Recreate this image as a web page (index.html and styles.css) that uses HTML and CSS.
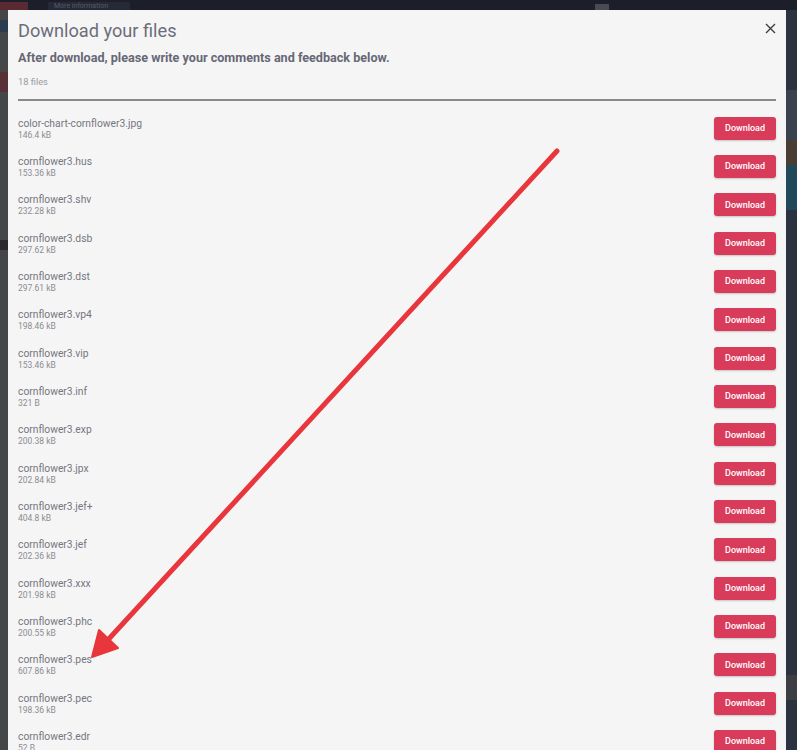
FILE: index.html
```html
<!DOCTYPE html>
<html lang="en">
<head>
<meta charset="utf-8">
<title>Download your files</title>
<link rel="stylesheet" href="styles.css">
</head>
<body>
<div class="backdrop">
  <div class="bg-top"><span class="bg-tab red"></span><span class="bg-tab">More information</span><span class="bg-chip"></span></div>
  <div class="bg-left"><span class="bl bl1"></span><span class="bl bl2"></span><span class="bl bl3"></span></div>
  <div class="bg-right"><span class="br br1"></span><span class="br br2"></span><span class="br br3"></span><span class="br br4"></span></div>
</div>
<div class="modal">
  <button class="close" aria-label="Close">
    <svg width="11" height="11" viewBox="0 0 11 11"><path d="M1 1L10 10M10 1L1 10" stroke="#3d3d45" stroke-width="1.4" fill="none"/></svg>
  </button>
  <h1 class="title">Download your files</h1>
  <p class="subtitle">After download, please write your comments and feedback below.</p>
  <p class="count">18 files</p>
  <hr class="rule">
  <ul class="files">
    <li class="row"><div class="info"><div class="name">color-chart-cornflower3.jpg</div><div class="size">146.4 kB</div></div><a class="btn">Download</a></li>
    <li class="row"><div class="info"><div class="name">cornflower3.hus</div><div class="size">153.36 kB</div></div><a class="btn">Download</a></li>
    <li class="row"><div class="info"><div class="name">cornflower3.shv</div><div class="size">232.28 kB</div></div><a class="btn">Download</a></li>
    <li class="row"><div class="info"><div class="name">cornflower3.dsb</div><div class="size">297.62 kB</div></div><a class="btn">Download</a></li>
    <li class="row"><div class="info"><div class="name">cornflower3.dst</div><div class="size">297.61 kB</div></div><a class="btn">Download</a></li>
    <li class="row"><div class="info"><div class="name">cornflower3.vp4</div><div class="size">198.46 kB</div></div><a class="btn">Download</a></li>
    <li class="row"><div class="info"><div class="name">cornflower3.vip</div><div class="size">153.46 kB</div></div><a class="btn">Download</a></li>
    <li class="row"><div class="info"><div class="name">cornflower3.inf</div><div class="size">321 B</div></div><a class="btn">Download</a></li>
    <li class="row"><div class="info"><div class="name">cornflower3.exp</div><div class="size">200.38 kB</div></div><a class="btn">Download</a></li>
    <li class="row"><div class="info"><div class="name">cornflower3.jpx</div><div class="size">202.84 kB</div></div><a class="btn">Download</a></li>
    <li class="row"><div class="info"><div class="name">cornflower3.jef+</div><div class="size">404.8 kB</div></div><a class="btn">Download</a></li>
    <li class="row"><div class="info"><div class="name">cornflower3.jef</div><div class="size">202.36 kB</div></div><a class="btn">Download</a></li>
    <li class="row"><div class="info"><div class="name">cornflower3.xxx</div><div class="size">201.98 kB</div></div><a class="btn">Download</a></li>
    <li class="row"><div class="info"><div class="name">cornflower3.phc</div><div class="size">200.55 kB</div></div><a class="btn">Download</a></li>
    <li class="row"><div class="info"><div class="name">cornflower3.pes</div><div class="size">607.86 kB</div></div><a class="btn">Download</a></li>
    <li class="row"><div class="info"><div class="name">cornflower3.pec</div><div class="size">198.36 kB</div></div><a class="btn">Download</a></li>
    <li class="row"><div class="info"><div class="name">cornflower3.edr</div><div class="size">52 B</div></div><a class="btn">Download</a></li>
  </ul>
</div>
<svg class="arrow" width="797" height="750" viewBox="0 0 797 750">
  <line x1="557" y1="151" x2="106" y2="642" stroke="#e8363c" stroke-width="5" stroke-linecap="round"/>
  <polygon points="92,657 99,630 118,648" fill="#e8363c" stroke="#e8363c" stroke-width="2" stroke-linejoin="round"/>
</svg>
</body>
</html>
```
FILE: styles.css
```css
* { box-sizing: border-box; }
html, body { margin: 0; padding: 0; }
body {
  width: 797px;
  height: 750px;
  overflow: hidden;
  background: #2c2e35;
  font-family: Roboto, "Noto Sans", "Liberation Sans", sans-serif;
  position: relative;
  padding-top: 10px;
}
.backdrop { position: absolute; inset: 0; }
.bg-top { position: absolute; left: 0; top: 0; width: 797px; height: 10px; background: #1c1f2a; }
.bg-tab { position: absolute; top: 2px; left: 48px; width: 82px; height: 8px; background: #262a38; color: #555a6a; font-size: 7px; line-height: 8px; padding-left: 6px; overflow: hidden; }
.bg-tab.red { left: 0; width: 28px; background: #5a2a34; }
.bg-chip { position: absolute; top: 4px; left: 595px; width: 14px; height: 6px; background: #4a4a52; }
.bg-left { position: absolute; left: 0; top: 10px; width: 8px; height: 740px; background: #454648; }
.bl { position: absolute; left: 0; width: 8px; }
.bl1 { top: 10px; height: 12px; background: #2a3c4e; }
.bl2 { top: 62px; height: 20px; background: #5a3038; }
.bl3 { top: 230px; height: 10px; background: #2a2a2c; }
.bg-right { position: absolute; left: 786px; top: 10px; width: 11px; height: 740px; background: #2b3340; }
.br { position: absolute; left: 0; width: 11px; }
.br1 { top: 80px; height: 50px; background: #3a4250; }
.br2 { top: 130px; height: 25px; background: #4a3e32; }
.br3 { top: 155px; height: 45px; background: #22495a; }
.br4 { top: 665px; height: 25px; background: #3c3e44; }

.modal {
  position: relative;
  margin: 0 0 0 8px;
  width: 778px;
  height: 760px;
  background: #f5f5f5;
  padding: 0 10px;
}
.close {
  position: absolute;
  top: 13px;
  right: 10px;
  width: 11px;
  height: 11px;
  padding: 0;
  border: 0;
  background: none;
  display: flex;
}
.title {
  margin: 0;
  padding-top: 9px;
  font-size: 18.2px;
  font-weight: 400;
  line-height: 24px;
  color: #6c6d7a;
}
.subtitle {
  margin: 0;
  padding-top: 7px;
  font-size: 12.6px;
  font-weight: 700;
  line-height: 16px;
  color: #676876;
}
.count {
  margin: 0;
  padding-top: 9.5px;
  font-size: 9.3px;
  line-height: 11px;
  color: #9a9aa2;
}
.rule {
  margin: 12.5px 0 0;
  border: 0;
  height: 2px;
  background: #8a8a8e;
}
.files {
  list-style: none;
  margin: 8px 0 0;
  padding: 0;
}
.row {
  height: 38.33px;
  display: flex;
  align-items: center;
  justify-content: space-between;
}
.info { display: flex; flex-direction: column; }
.name {
  font-size: 10.3px;
  line-height: 13px;
  color: #75767f;
}
.size {
  font-size: 8.5px;
  line-height: 10px;
  color: #8c8c92;
}
.btn {
  width: 62px;
  height: 23px;
  border-radius: 3px;
  background: #d93b5b;
  color: #fff;
  font-size: 9px;
  font-weight: 500;
  display: flex;
  align-items: center;
  justify-content: center;
  box-shadow: 0 1px 2px rgba(0,0,0,0.2);
}
.arrow { position: absolute; left: 0; top: 0; pointer-events: none; }
```
